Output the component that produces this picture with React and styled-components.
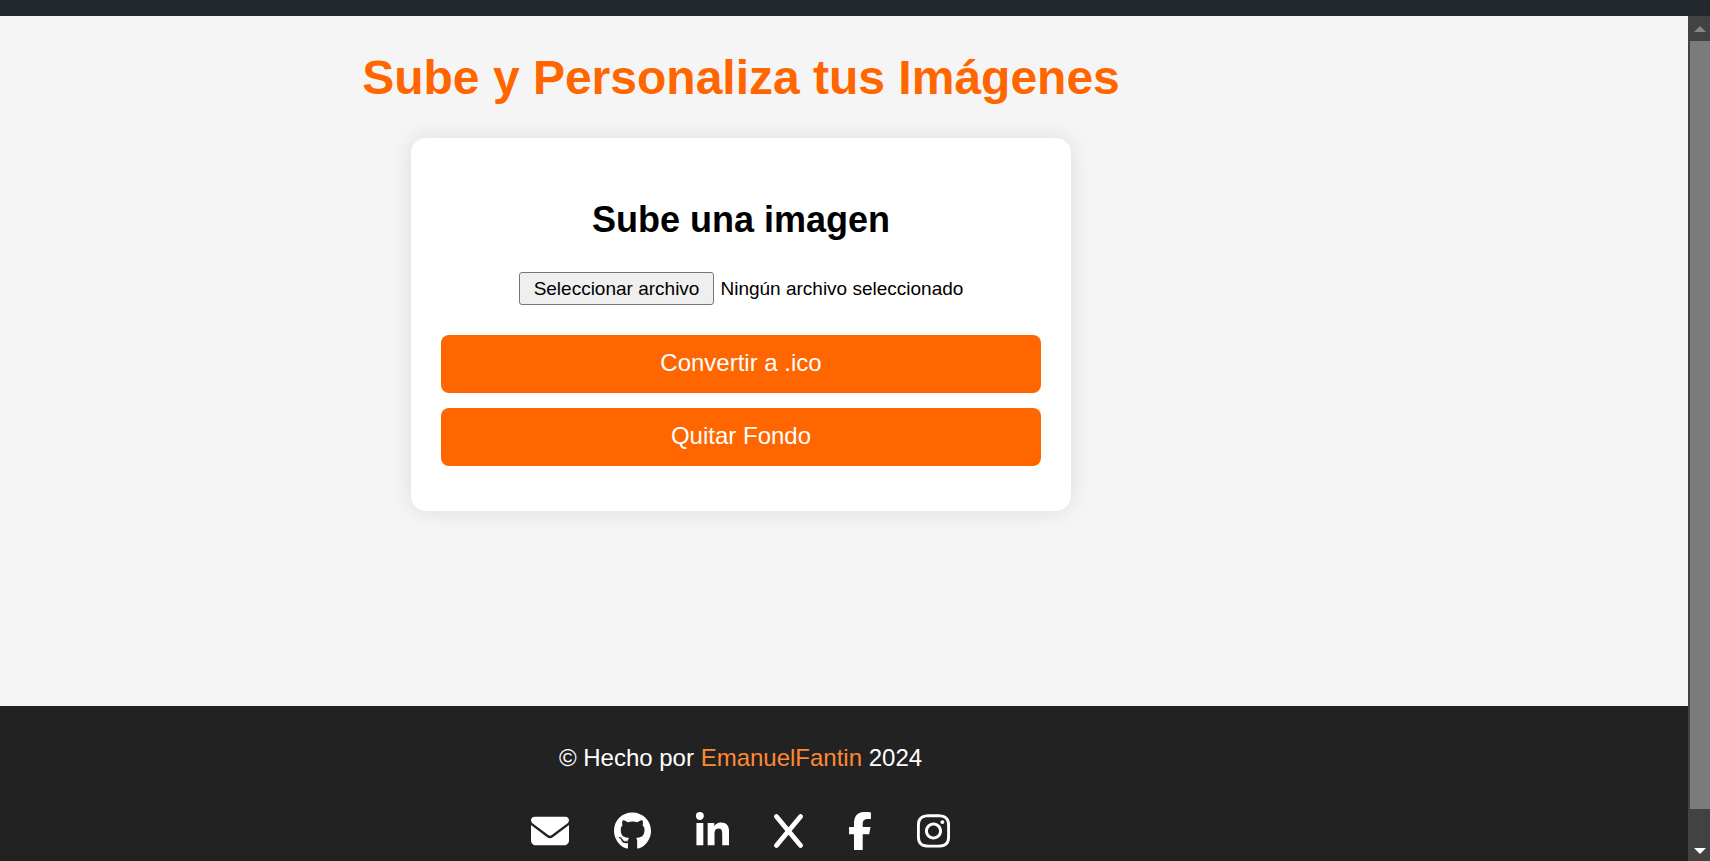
import React, { useRef, useState } from 'react';
import styled, { createGlobalStyle } from 'styled-components';
import {
  FaEnvelope,
  FaGithub,
  FaLinkedinIn,
  FaX,
  FaFacebookF,
  FaInstagram,
} from 'react-icons/fa6';

const GlobalStyle = createGlobalStyle`
  *, *::before, *::after { box-sizing: border-box; }
  body {
    margin: 0;
    background: #f5f5f5;
    color: #000;
    font-family: "Liberation Sans", Arial, sans-serif;
    font-size: 24px;
    line-height: 28px;
  }
`;

const Shell = styled.div`
  display: flex;
  flex-direction: column;
  height: 100vh;
  overflow: hidden;
`;

const TopStrip = styled.div`
  flex: 0 0 16px;
  background: #23282c;
`;

const Viewport = styled.div`
  display: flex;
  flex: 1;
  min-height: 0;
`;

const Page = styled.div`
  display: flex;
  flex-direction: column;
  flex: 1;
  min-width: 0;
`;

const Main = styled.main`
  display: flex;
  flex-direction: column;
  align-items: center;
  flex: 1;
  padding: 34px 206px 0 0;
`;

const Title = styled.h1`
  margin: 0 0 33px;
  color: #ff6600;
  font-size: 48px;
  line-height: 55px;
  text-align: center;
`;

const Card = styled.section`
  display: flex;
  flex-direction: column;
  align-items: center;
  width: 660px;
  max-width: 100%;
  padding: 61px 30px 45px;
  border-radius: 15px;
  background: #fff;
  box-shadow: 0 0 22px rgba(0, 0, 0, 0.1);
`;

const CardTitle = styled.h2`
  margin: 0 0 31px;
  font-size: 36px;
  line-height: 42px;
`;

const FileRow = styled.div`
  display: flex;
  align-items: baseline;
  gap: 6px;
  margin-bottom: 30px;
  font-size: 19px;
  line-height: 23px;
`;

const FileButton = styled.button`
  height: 33px;
  padding: 0 14px;
  border: 1px solid #767676;
  border-radius: 3px;
  background: #efefef;
  color: #000;
  font: inherit;
`;

const Actions = styled.div`
  display: flex;
  flex-direction: column;
  gap: 15px;
  width: 100%;
`;

const ActionButton = styled.button`
  height: 58px;
  padding: 0 15px 2px;
  border: 0;
  border-radius: 8px;
  background: #ff6600;
  color: #fff;
  font: inherit;
  cursor: pointer;
`;

const Footer = styled.footer`
  display: flex;
  flex-direction: column;
  align-items: center;
  gap: 40px;
  padding: 38px 207px 11px 0;
  background: #222;
  color: #fff;
`;

const Credit = styled.p`
  margin: 0;
`;

const AuthorLink = styled.a`
  color: #ff8833;
  text-decoration: none;
`;

const SocialNav = styled.nav`
  display: flex;
  gap: 45px;
`;

const SocialLink = styled.a`
  color: #fff;

  svg {
    display: block;
    width: ${(p) => p.$width}px;
    height: 38px;
  }
`;

const ScrollTrack = styled.div`
  display: flex;
  flex-direction: column;
  flex: 0 0 22px;
  padding-left: 2px;
  background: #424242;
`;

const ScrollArrow = styled.div`
  display: flex;
  justify-content: center;
  align-items: center;
  flex: 0 0 ${(p) => (p.$up ? 25 : 20)}px;

  &::before {
    content: "";
    border: 6px solid transparent;
    border-top-width: ${(p) => (p.$up ? 0 : 6)}px;
    border-bottom-width: ${(p) => (p.$up ? 6 : 0)}px;
    border-${(p) => (p.$up ? 'bottom' : 'top')}-color: ${(p) => (p.$up ? '#868686' : '#fff')};
  }
`;

const ScrollLane = styled.div`
  flex: 1;
`;

const ScrollThumb = styled.div`
  height: 96%;
  background: #7b7b7b;
`;

const socials = [
  { label: 'Correo', href: '#correo', Icon: FaEnvelope, width: 38 },
  { label: 'GitHub', href: '#github', Icon: FaGithub, width: 37 },
  { label: 'LinkedIn', href: '#linkedin', Icon: FaLinkedinIn, width: 33 },
  { label: 'X', href: '#x', Icon: FaX, width: 29 },
  { label: 'Facebook', href: '#facebook', Icon: FaFacebookF, width: 24 },
  { label: 'Instagram', href: '#instagram', Icon: FaInstagram, width: 33 },
];

function FilePicker() {
  const input = useRef(null);
  const [name, setName] = useState('Ningún archivo seleccionado');
  return (
    <FileRow>
      <input
        ref={input}
        type="file"
        accept="image/*"
        aria-label="Imagen"
        hidden
        onChange={(e) =>
          setName(e.target.files[0]?.name ?? 'Ningún archivo seleccionado')
        }
      />
      <FileButton type="button" onClick={() => input.current.click()}>
        Seleccionar archivo
      </FileButton>
      <span>{name}</span>
    </FileRow>
  );
}

export default function App() {
  return (
    <Shell>
      <GlobalStyle />
      <TopStrip />
      <Viewport>
        <Page>
          <Main>
            <Title>Sube y Personaliza tus Imágenes</Title>
            <Card>
              <CardTitle>Sube una imagen</CardTitle>
              <FilePicker />
              <Actions>
                <ActionButton type="button">Convertir a .ico</ActionButton>
                <ActionButton type="button">Quitar Fondo</ActionButton>
              </Actions>
            </Card>
          </Main>
          <Footer>
            <Credit>
              © Hecho por <AuthorLink href="#autor">EmanuelFantin</AuthorLink> 2024
            </Credit>
            <SocialNav aria-label="Redes sociales">
              {socials.map(({ label, href, Icon, width }) => (
                <SocialLink key={label} href={href} aria-label={label} $width={width}>
                  <Icon aria-hidden="true" preserveAspectRatio="xMidYMid slice" />
                </SocialLink>
              ))}
            </SocialNav>
          </Footer>
        </Page>
        <ScrollTrack aria-hidden="true">
          <ScrollArrow $up />
          <ScrollLane>
            <ScrollThumb />
          </ScrollLane>
          <ScrollArrow />
        </ScrollTrack>
      </Viewport>
    </Shell>
  );
}
